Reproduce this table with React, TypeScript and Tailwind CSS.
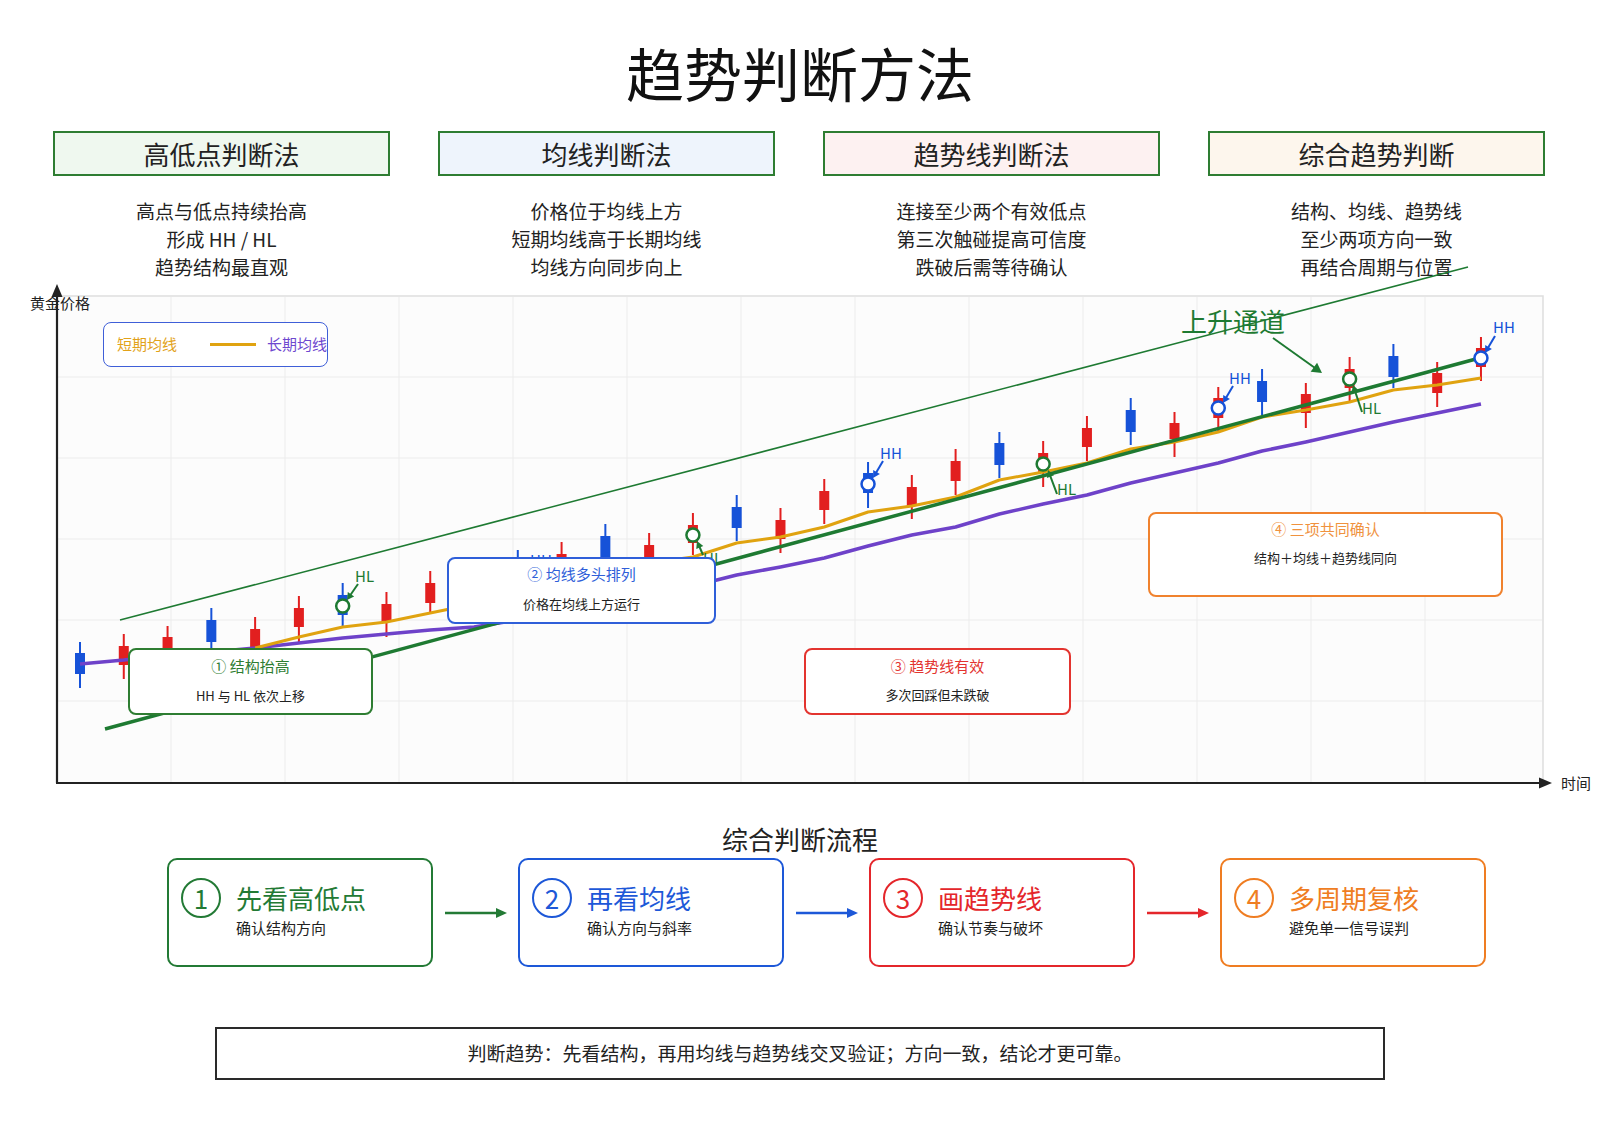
import React from 'react';

type C = ['r' | 'b', number, number, number, number];
const candles: C[] = [
  ['b', 642, 688, 653, 674],
  ['r', 634, 679, 646, 665],
  ['r', 626, 666, 637, 655],
  ['b', 608, 648, 620, 642],
  ['r', 617, 660, 629, 647],
  ['r', 596, 642, 608, 627],
  ['b', 583, 627, 595, 615],
  ['r', 592, 637, 604, 622],
  ['r', 571, 613, 583, 603],
  ['r', 565, 610, 577, 597],
  ['b', 550, 598, 562, 585],
  ['r', 542, 585, 554, 572],
  ['b', 524, 570, 536, 560],
  ['r', 533, 578, 545, 565],
  ['r', 513, 555, 525, 543],
  ['b', 495, 541, 507, 528],
  ['r', 508, 553, 520, 539],
  ['r', 479, 524, 491, 510],
  ['b', 462, 508, 473, 493],
  ['r', 475, 519, 487, 506],
  ['r', 449, 495, 461, 481],
  ['b', 432, 478, 443, 465],
  ['r', 441, 487, 453, 472],
  ['r', 416, 461, 428, 447],
  ['b', 398, 445, 410, 432],
  ['r', 412, 457, 423, 439],
  ['r', 387, 431, 398, 418],
  ['b', 369, 415, 381, 402],
  ['r', 383, 428, 394, 413],
  ['r', 357, 403, 369, 388],
  ['b', 344, 388, 356, 377],
  ['r', 362, 407, 373, 393],
  ['r', 337, 381, 348, 367],
];
const cx = (i: number) => 80 + i * 43.78;

const purple = [664, 660, 655, 652, 648, 643, 638, 634, 630, 627, 620, 612, 603, 594, 586, 575, 567, 558, 546, 535, 527, 514, 504, 495, 483, 473, 463, 451, 442, 432, 422, 413, 404];
const orange: [number, number][] = [
  [4, 648], [5, 637], [6, 627], [7, 622], [8, 613], [9, 604], [10, 594], [11, 583], [12, 572], [13, 563], [14, 557],
  [15, 543], [16, 537], [17, 527], [18, 512], [19, 506], [20, 497], [21, 480], [22, 472], [23, 463], [24, 449], [25, 442],
  [26, 432], [27, 417], [28, 410], [29, 402], [30, 390], [31, 385], [32, 378],
];

const RED = '#e21f1f';
const BLUE = '#1652d8';
const GREEN = '#1e7a32';

function Arrow({ x1, y1, x2, y2, color, w = 2, head = 8 }: { x1: number; y1: number; x2: number; y2: number; color: string; w?: number; head?: number }) {
  const dx = x2 - x1;
  const dy = y2 - y1;
  const L = Math.hypot(dx, dy);
  const ux = dx / L;
  const uy = dy / L;
  const bx = x2 - ux * head;
  const by = y2 - uy * head;
  const px = -uy;
  const py = ux;
  const hw = head * 0.55;
  return (
    <g>
      <line x1={x1} y1={y1} x2={bx + ux * 1} y2={by + uy * 1} stroke={color} strokeWidth={w} />
      <polygon points={`${x2},${y2} ${bx + px * hw},${by + py * hw} ${bx - px * hw},${by - py * hw}`} fill={color} />
    </g>
  );
}

type M = { i: number; cy: number; hh: boolean; lx: number; ly: number; a: [number, number, number, number] };
const markers: M[] = [
  { i: 6, cy: 606, hh: false, lx: 355, ly: 582, a: [358, 584, 347, 600] },
  { i: 10, cy: 588, hh: true, lx: 530, ly: 566, a: [532, 568, 522, 583] },
  { i: 14, cy: 535, hh: false, lx: 703, ly: 564, a: [703, 555, 697, 541] },
  { i: 18, cy: 484, hh: true, lx: 880, ly: 459, a: [883, 461, 873, 478] },
  { i: 22, cy: 464, hh: false, lx: 1057, ly: 495, a: [1057, 494, 1048, 470] },
  { i: 26, cy: 408, hh: true, lx: 1229, ly: 384, a: [1233, 386, 1223, 403] },
  { i: 29, cy: 379, hh: false, lx: 1362, ly: 414, a: [1362, 412, 1353, 385] },
  { i: 32, cy: 358, hh: true, lx: 1493, ly: 333, a: [1495, 336, 1485, 353] },
];

const FONT = '"Noto Sans CJK SC", "Noto Sans", sans-serif';

function Chart() {
  const vlines: number[] = [];
  for (let k = 0; k < 12; k++) vlines.push(171 + 114 * k);
  const hlines = [377, 458, 539, 620, 701];
  return (
    <svg className="absolute left-0 top-0 overflow-visible" width="1600" height="520" viewBox="0 281 1600 520" style={{ fontFamily: FONT }}>
      <rect x="57" y="296" width="1486" height="487" fill="#fcfcfc" stroke="#dedede" strokeWidth="1.5" />
      {vlines.map((x) => (
        <line key={'v' + x} x1={x} y1={297} x2={x} y2={782} stroke="#ececec" strokeWidth="1" />
      ))}
      {hlines.map((y) => (
        <line key={'h' + y} x1={58} y1={y} x2={1542} y2={y} stroke="#ececec" strokeWidth="1" />
      ))}
      {/* upper channel line */}
      <line x1="120" y1="620" x2="1468" y2="267" stroke={GREEN} strokeWidth="1.5" />
      {/* candles */}
      {candles.map((c, i) => {
        const x = cx(i);
        const col = c[0] === 'r' ? RED : BLUE;
        return (
          <g key={i}>
            <line x1={x} y1={c[1]} x2={x} y2={c[2]} stroke={col} strokeWidth="2" />
            <rect x={x - 5} y={c[3]} width="10" height={c[4] - c[3]} fill={col} />
          </g>
        );
      })}
      {/* long MA */}
      <polyline points={purple.map((y, i) => `${cx(i)},${y}`).join(' ')} fill="none" stroke="#6e42c9" strokeWidth="3.5" strokeLinejoin="round" />
      {/* short MA */}
      <polyline points={orange.map(([i, y]) => `${cx(i)},${y}`).join(' ')} fill="none" stroke="#e0a310" strokeWidth="3" strokeLinejoin="round" />
      {/* trend line */}
      <line x1="105" y1="729" x2="1487" y2="356" stroke={GREEN} strokeWidth="3.5" />
      {/* markers */}
      {markers.map((m) => {
        const col = m.hh ? BLUE : GREEN;
        return (
          <g key={m.i}>
            <Arrow x1={m.a[0]} y1={m.a[1]} x2={m.a[2]} y2={m.a[3]} color={col} w={2} head={7} />
            <circle cx={cx(m.i)} cy={m.cy} r="6.5" fill="#fff" stroke={col} strokeWidth="2.5" />
            <text x={m.lx} y={m.ly} fontSize="15" fill={col}>
              {m.hh ? 'HH' : 'HL'}
            </text>
          </g>
        );
      })}
      {/* channel label */}
      <text x="1181" y="332" fontSize="26" fill={GREEN}>上升通道</text>
      <Arrow x1={1273} y1={338} x2={1322} y2={373} color={GREEN} w={2} head={10} />
      {/* axes */}
      <text x="30" y="309" fontSize="15" fill="#222">黄金价格</text>
      <text x="1561" y="789" fontSize="15" fill="#222">时间</text>
      <line x1="57" y1="783" x2="57" y2="296" stroke="#222" strokeWidth="2.2" />
      <polygon points="57,284 51.5,297 62.5,297" fill="#222" />
      <line x1="56" y1="783" x2="1541" y2="783" stroke="#222" strokeWidth="2.2" />
      <polygon points="1552,783 1539,777.5 1539,788.5" fill="#222" />
    </svg>
  );
}

const headers = [
  { t: '高低点判断法', bg: 'bg-[#eff8ef]', lines: ['高点与低点持续抬高', '形成 HH / HL', '趋势结构最直观'] },
  { t: '均线判断法', bg: 'bg-[#eef4fc]', lines: ['价格位于均线上方', '短期均线高于长期均线', '均线方向同步向上'] },
  { t: '趋势线判断法', bg: 'bg-[#fdf1f1]', lines: ['连接至少两个有效低点', '第三次触碰提高可信度', '跌破后需等待确认'] },
  { t: '综合趋势判断', bg: 'bg-[#fdf6ed]', lines: ['结构、均线、趋势线', '至少两项方向一致', '再结合周期与位置'] },
];

const flows = [
  { n: '1', t: '先看高低点', s: '确认结构方向', b: 'border-[#237a35]', c: 'text-[#237a35]', a: '#237a35' },
  { n: '2', t: '再看均线', s: '确认方向与斜率', b: 'border-[#1d58d8]', c: 'text-[#1d58d8]', a: '#1d58d8' },
  { n: '3', t: '画趋势线', s: '确认节奏与破坏', b: 'border-[#e4262b]', c: 'text-[#e4262b]', a: '#e4262b' },
  { n: '4', t: '多周期复核', s: '避免单一信号误判', b: 'border-[#ef7d22]', c: 'text-[#ef7d22]', a: '#ef7d22' },
];

export default function App() {
  return (
    <div className="relative w-[1600px] h-[1131px] overflow-hidden bg-white text-[#222] font-['Noto_Sans_CJK_SC','Noto_Sans',sans-serif]">
      <h1 className="pt-[43px] text-center text-[58px] leading-[58px] text-[#111]">趋势判断方法</h1>

      <div className="mt-[30px] ml-[53px] flex gap-[48px]">
        {headers.map((h) => (
          <div key={h.t} className="w-[337px]">
            <div className={`h-[45px] border-2 border-[#2e7d32] ${h.bg} flex items-center justify-center text-[26px] leading-none text-[#222]`}>{h.t}</div>
            <div className="mt-[21px] text-center text-[19px] leading-[28px] text-[#222]">
              {h.lines.map((l) => (
                <div key={l}>{l}</div>
              ))}
            </div>
          </div>
        ))}
      </div>

      <div className="relative h-[520px]">
        <Chart />
        {/* legend */}
        <div className="absolute left-[103px] top-[41px] w-[225px] h-[45px] rounded-[8px] border-[1.5px] border-[#3f5fd8] bg-white flex items-center pl-[13px] text-[15px]">
          <span className="text-[#e2a21a] whitespace-nowrap">短期均线</span>
          <span className="ml-[33px] w-[47px] h-[3px] bg-[#e0a310]"></span>
          <span className="ml-[11px] text-[#6e48cf] whitespace-nowrap">长期均线</span>
        </div>
        {/* annotation boxes */}
        <div className="absolute left-[128px] top-[367px] w-[245px] h-[67px] rounded-[8px] border-2 border-[#2e7d32] bg-white text-center pt-[6px]">
          <div className="text-[15px] leading-[20px] text-[#2e7d32]">① 结构抬高</div>
          <div className="mt-[11px] text-[13px] leading-[18px] text-[#222]">HH 与 HL 依次上移</div>
        </div>
        <div className="absolute left-[447px] top-[276px] w-[269px] h-[67px] rounded-[8px] border-2 border-[#2f5fd9] bg-white text-center pt-[5px]">
          <div className="text-[15px] leading-[20px] text-[#2f5fd9]">② 均线多头排列</div>
          <div className="mt-[11px] text-[13px] leading-[18px] text-[#222]">价格在均线上方运行</div>
        </div>
        <div className="absolute left-[804px] top-[367px] w-[267px] h-[67px] rounded-[8px] border-2 border-[#e3342f] bg-white text-center pt-[6px]">
          <div className="text-[15px] leading-[20px] text-[#e3342f]">③ 趋势线有效</div>
          <div className="mt-[10px] text-[13px] leading-[18px] text-[#222]">多次回踩但未跌破</div>
        </div>
        <div className="absolute left-[1148px] top-[231px] w-[355px] h-[85px] rounded-[8px] border-2 border-[#f0822e] bg-white text-center pt-[5px]">
          <div className="text-[15px] leading-[20px] text-[#f0923e]">④ 三项共同确认</div>
          <div className="mt-[10px] text-[13px] leading-[18px] text-[#222]">结构＋均线＋趋势线同向</div>
        </div>
      </div>

      <div className="mt-[25px] text-center text-[26px] leading-[26px] text-[#222]">综合判断流程</div>

      <div className="mt-[6px] ml-[167px] flex">
        {flows.map((f, i) => (
          <React.Fragment key={f.n}>
            <div className={`w-[266px] h-[109px] rounded-[10px] border-2 ${f.b} flex items-start pl-[12px] pt-[18px]`}>
              <div className={`w-[40px] h-[40px] rounded-full border-2 ${f.b} ${f.c} flex items-center justify-center text-[26px] leading-none`}>{f.n}</div>
              <div className="ml-[15px] flex flex-col">
                <div className={`text-[26px] leading-[40px] ${f.c}`}>{f.t}</div>
                <div className="text-[15px] leading-[20px] text-[#222]">{f.s}</div>
              </div>
            </div>
            {i < 3 && (
              <div className="w-[85px] h-[109px] flex items-center pl-[12px]">
                <svg width="62" height="14" viewBox="0 0 62 14">
                  <line x1="0" y1="7" x2="52" y2="7" stroke={f.a} strokeWidth="2.5" />
                  <polygon points="62,7 51,2 51,12" fill={f.a} />
                </svg>
              </div>
            )}
          </React.Fragment>
        ))}
      </div>

      <div className="mt-[60px] mx-auto w-[1170px] h-[53px] border-2 border-[#2a2a2a] flex items-center justify-center text-[19px] text-[#222]">
        判断趋势：先看结构，再用均线与趋势线交叉验证；方向一致，结论才更可靠。
      </div>
    </div>
  );
}
